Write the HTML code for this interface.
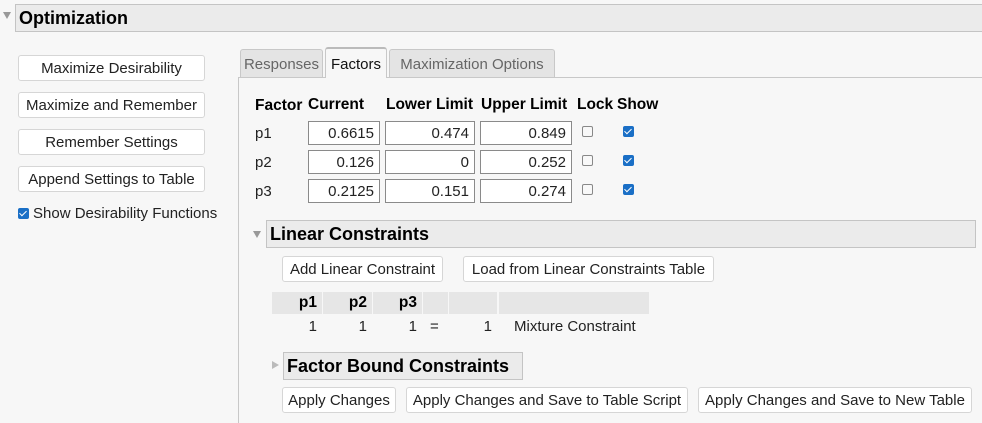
<!DOCTYPE html>
<html><head><style>
body{margin:0;width:982px;height:423px;background:#f7f7f7;font-family:"Liberation Sans",sans-serif;font-size:15px;color:#222;position:relative;overflow:hidden}
.a{position:absolute;box-sizing:border-box}
.btn{position:absolute;box-sizing:border-box;background:#fff;border:1px solid #d6d6d6;border-radius:3px;text-align:center;font-size:15px;color:#222;white-space:nowrap}
.bar{position:absolute;box-sizing:border-box;background:#ebebeb;border:1px solid #c4c4c4;font-weight:bold;color:#000;white-space:nowrap}
.inp{position:absolute;box-sizing:border-box;background:#fff;border:1px solid #8a8a8a;height:24px;text-align:right;padding-right:5px;line-height:23px;font-size:15px}
.cb{position:absolute;width:11px;height:11px;box-sizing:border-box;border:1px solid #888;border-radius:2px;background:#f8f8f8}
.cbc{position:absolute;width:11px;height:11px;background:#1a6fc6;border-radius:2px}
.cbc:after{content:"";position:absolute;left:3px;top:1px;width:3px;height:6px;border:solid #fff;border-width:0 1.5px 1.5px 0;transform:rotate(45deg)}
.th{position:absolute;font-weight:bold;color:#000;font-size:15.5px}
.tri{position:absolute;width:0;height:0;border-left:4px solid transparent;border-right:4px solid transparent;border-top:7px solid #999}
.tab{position:absolute;box-sizing:border-box;border:1px solid #c8c8c8;border-bottom:none;border-radius:3px 3px 0 0;background:#e4e4e4;color:#666;font-size:15px;text-align:center;line-height:29px;white-space:nowrap}
.hc{position:absolute;background:#e6e6e6;height:22px;top:292px;font-weight:bold;color:#000;text-align:right;padding-right:5px;box-sizing:border-box;line-height:22px;font-size:15.5px}
</style></head><body>
<div class="tri" style="left:3px;top:12px"></div>
<div class="bar" style="left:15px;top:4px;width:970px;height:28px;font-size:18px;line-height:26px;padding-left:3px">Optimization</div>

<div class="btn" style="left:18px;top:55px;width:187px;height:26px;line-height:26px">Maximize Desirability</div>
<div class="btn" style="left:18px;top:92px;width:187px;height:26px;line-height:26px">Maximize and Remember</div>
<div class="btn" style="left:18px;top:129px;width:187px;height:26px;line-height:26px">Remember Settings</div>
<div class="btn" style="left:18px;top:166px;width:187px;height:26px;line-height:26px">Append Settings to Table</div>
<div class="cbc" style="left:18px;top:208px"></div>
<div class="a" style="left:33px;top:205px;white-space:nowrap">Show Desirability Functions</div>

<div class="a" style="left:238px;top:77px;width:1px;height:346px;background:#c8c8c8"></div>
<div class="a" style="left:238px;top:77px;width:744px;height:1px;background:#c8c8c8"></div>
<div class="tab" style="left:240px;top:49px;width:83px;height:28px">Responses</div>
<div class="tab" style="left:325px;top:47px;width:62px;height:31px;background:#f7f7f7;color:#111;border-top:2px solid #bbb;line-height:31px">Factors</div>
<div class="tab" style="left:389px;top:49px;width:166px;height:28px">Maximization Options</div>

<div class="th" style="left:255px;top:97px">Factor</div>
<div class="th" style="left:308px;top:96px">Current</div>
<div class="th" style="left:386px;top:96px">Lower Limit</div>
<div class="th" style="left:481px;top:96px">Upper Limit</div>
<div class="th" style="left:577px;top:96px">Lock</div>
<div class="th" style="left:617px;top:96px">Show</div>

<div class="a" style="left:255px;top:125px">p1</div>
<div class="a" style="left:255px;top:154px">p2</div>
<div class="a" style="left:255px;top:183px">p3</div>
<div class="inp" style="left:308px;top:121px;width:72px">0.6615</div>
<div class="inp" style="left:385px;top:121px;width:90px">0.474</div>
<div class="inp" style="left:480px;top:121px;width:92px">0.849</div>
<div class="inp" style="left:308px;top:150px;width:72px">0.126</div>
<div class="inp" style="left:385px;top:150px;width:90px">0</div>
<div class="inp" style="left:480px;top:150px;width:92px">0.252</div>
<div class="inp" style="left:308px;top:179px;width:72px">0.2125</div>
<div class="inp" style="left:385px;top:179px;width:90px">0.151</div>
<div class="inp" style="left:480px;top:179px;width:92px">0.274</div>
<div class="cb" style="left:582px;top:126px"></div>
<div class="cb" style="left:582px;top:155px"></div>
<div class="cb" style="left:582px;top:184px"></div>
<div class="cbc" style="left:623px;top:126px"></div>
<div class="cbc" style="left:623px;top:155px"></div>
<div class="cbc" style="left:623px;top:184px"></div>

<div class="tri" style="left:253px;top:231px"></div>
<div class="bar" style="left:266px;top:220px;width:710px;height:28px;font-size:18px;line-height:27px;padding-left:3px">Linear Constraints</div>
<div class="btn" style="left:282px;top:256px;width:161px;height:26px;line-height:26px">Add Linear Constraint</div>
<div class="btn" style="left:463px;top:256px;width:251px;height:26px;line-height:26px">Load from Linear Constraints Table</div>

<div class="hc" style="left:272px;width:50px">p1</div>
<div class="hc" style="left:323px;width:49px">p2</div>
<div class="hc" style="left:373px;width:49px">p3</div>
<div class="hc" style="left:423px;width:25px"></div>
<div class="hc" style="left:449px;width:48px"></div>
<div class="hc" style="left:499px;width:150px"></div>
<div class="a" style="left:272px;top:318px;width:45px;text-align:right">1</div>
<div class="a" style="left:323px;top:318px;width:44px;text-align:right">1</div>
<div class="a" style="left:373px;top:318px;width:44px;text-align:right">1</div>
<div class="a" style="left:430px;top:318px">=</div>
<div class="a" style="left:449px;top:318px;width:43px;text-align:right">1</div>
<div class="a" style="left:514px;top:318px;white-space:nowrap">Mixture Constraint</div>

<div class="a" style="left:272px;top:361px;width:0;height:0;border-top:4px solid transparent;border-bottom:4px solid transparent;border-left:7px solid #bbb"></div>
<div class="bar" style="left:283px;top:352px;width:240px;height:28px;font-size:18px;line-height:27px;padding-left:3px">Factor Bound Constraints</div>
<div class="btn" style="left:282px;top:387px;width:114px;height:26px;line-height:26px">Apply Changes</div>
<div class="btn" style="left:406px;top:387px;width:282px;height:26px;line-height:26px">Apply Changes and Save to Table Script</div>
<div class="btn" style="left:698px;top:387px;width:274px;height:26px;line-height:26px">Apply Changes and Save to New Table</div>
</body></html>
